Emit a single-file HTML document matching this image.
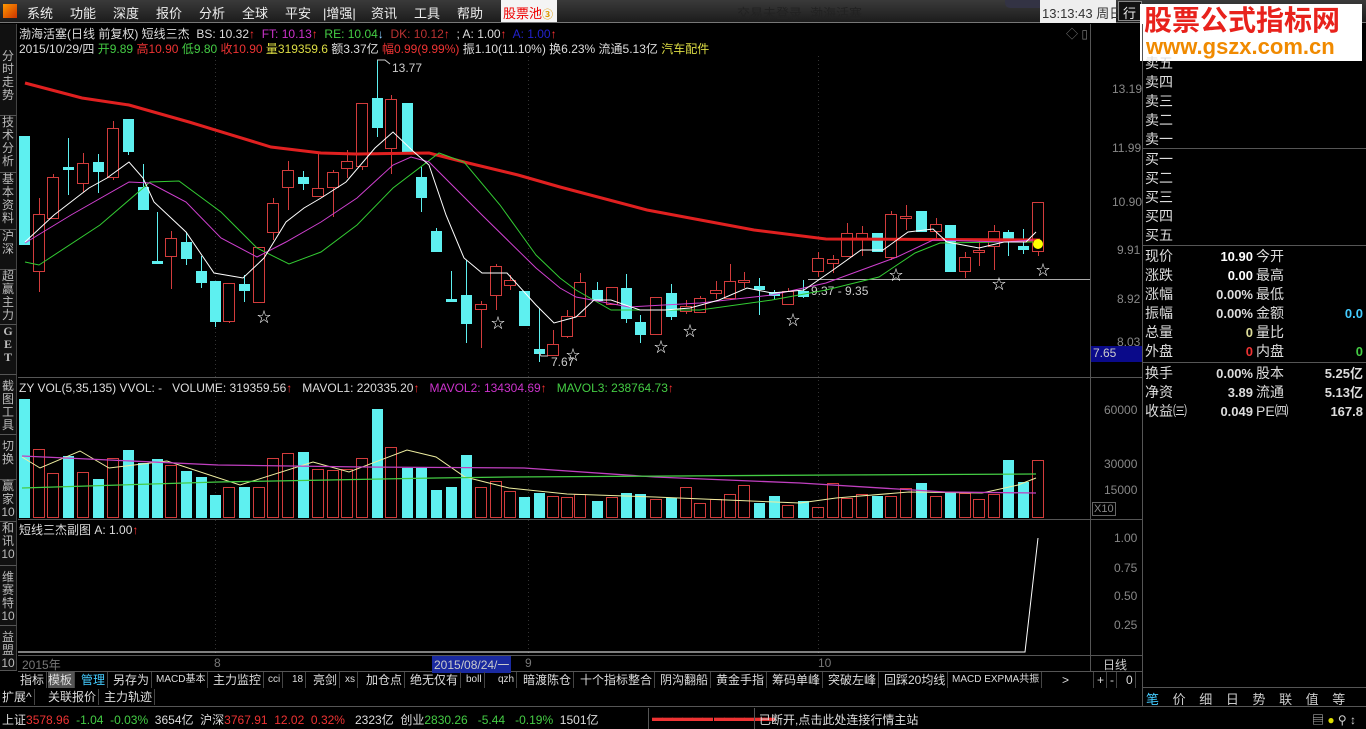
<!DOCTYPE html>
<html><head><meta charset="utf-8">
<style>
*{margin:0;padding:0;box-sizing:border-box}
body{width:1366px;height:729px;background:#000;overflow:hidden;position:relative;font-family:"Liberation Sans","Noto Sans CJK SC",sans-serif;font-size:12px;color:#ccc}
.a{position:absolute;white-space:nowrap}
#menu{position:absolute;left:0;top:0;width:1366px;height:23px;background:linear-gradient(#3a3a3a,#1c1c1c);border-bottom:1px solid #777}
#menu span{position:absolute;top:3px;color:#eee;font-size:13px}
.side{position:absolute;left:0;width:17px;background:#111;border-right:1px solid #444;color:#bbb;font-size:12px;line-height:13px;text-align:center;border-bottom:1px solid #555}
.rp{color:#ddd;font-size:14px;line-height:19px}
.tb span{position:absolute;top:0;color:#ddd;font-size:12px;line-height:16px;border-right:1px solid #444;padding-right:2px}
.tb .s{font-size:10px}
</style></head><body>
<div id="menu">
<div style="position:absolute;left:3px;top:4px;width:14px;height:14px;background:linear-gradient(135deg,#f90,#c30)"></div>
<span style="left:27px">系统</span><span style="left:70px">功能</span><span style="left:113px">深度</span><span style="left:156px">报价</span><span style="left:199px">分析</span><span style="left:242px">全球</span><span style="left:285px">平安</span><span style="left:323px">|增强|</span><span style="left:371px">资讯</span><span style="left:414px">工具</span><span style="left:457px">帮助</span>
<div style="position:absolute;left:501px;top:0;width:56px;height:22px;background:#f4f4f4"></div><span style="left:503px;color:#e00">股票池<b style="color:#d90;font-size:11px">③</b></span>
<span style="left:737px;color:#222">交易未登录</span><span style="left:810px;color:#222">渤海活塞</span>
<div style="position:absolute;left:1005px;top:0;width:58px;height:8px;background:#334;border-radius:0 0 5px 5px"></div>
<div style="position:absolute;left:1040px;top:0;width:76px;height:23px;background:#eee"></div><span style="left:1042px;color:#333">13:13:43 周日</span>
<div style="position:absolute;left:1118px;top:1px;width:24px;height:20px;border:1px solid #888;background:#111"></div><span style="left:1123px">行</span>
</div>
<!-- watermark -->
<div style="position:absolute;left:1140px;top:4px;width:222px;height:57px;background:#fff;overflow:hidden">
<div class="a" style="left:4px;top:0px;color:#e8221c;font-size:28px;font-weight:bold;line-height:34px">股票公式指标网</div>
<div class="a" style="left:6px;top:31px;color:#f08a00;font-size:22px;font-weight:bold;line-height:24px">www.gszx.com.cn</div>
</div>

<!-- sidebar -->
<div class="side" style="top:24px;height:92px;padding-top:26px">分<br>时<br>走<br>势</div>
<div class="side" style="top:116px;height:57px">技<br>术<br>分<br>析</div>
<div class="side" style="top:173px;height:57px">基<br>本<br>资<br>料</div>
<div class="side" style="top:230px;height:40px">沪<br>深</div>
<div class="side" style="top:270px;height:55px">超<br>赢<br>主<br>力</div>
<div class="side" style="top:325px;height:50px;font-weight:bold;font-family:'Liberation Serif'">G<br>E<br>T</div>
<div class="side" style="top:375px;height:60px;padding-top:5px">截<br>图<br>工<br>具</div>
<div class="side" style="top:435px;height:45px;padding-top:5px">切<br>换</div>
<div class="side" style="top:480px;height:42px">赢<br>家<br>10</div>
<div class="side" style="top:522px;height:44px">和<br>讯<br>10</div>
<div class="side" style="top:566px;height:60px;padding-top:5px">维<br>赛<br>特<br>10</div>
<div class="side" style="top:626px;height:45px;padding-top:5px">益<br>盟<br>10</div>

<!-- info lines -->
<div class="a" style="left:19px;top:25px;font-size:12px;color:#ddd">渤海活塞(日线 前复权) 短线三杰&nbsp; BS: 10.32<span style="color:#f33">↑</span>&nbsp; <span style="color:#c3c">FT: 10.13</span><span style="color:#f33">↑</span>&nbsp; <span style="color:#4c4">RE: 10.04</span><span style="color:#8cf">↓</span>&nbsp; <span style="color:#b33">DK: 10.12</span><span style="color:#f33">↑</span>&nbsp; ; A: 1.00<span style="color:#f33">↑</span>&nbsp; <span style="color:#22c">A: 1.00</span><span style="color:#f33">↑</span></div>
<div class="a" style="left:19px;top:40px;font-size:12px;color:#ddd">2015/10/29/四 <span style="color:#4c4">开9.89</span> <span style="color:#e33">高10.90</span> <span style="color:#4c4">低9.80</span> <span style="color:#e33">收10.90</span> <span style="color:#dd4">量319359.6</span> 额3.37亿 <span style="color:#e33">幅0.99(9.99%)</span> 振1.10(11.10%) 换6.23% 流通5.13亿 <span style="color:#dd4">汽车配件</span></div>
<div class="a" style="left:1066px;top:25px;color:#777;font-size:12px">◇ ▯</div>

<!-- right axis labels -->
<div class="a" style="left:1112px;top:82px;color:#888">13.19</div>
<div class="a" style="left:1112px;top:141px;color:#888">11.99</div>
<div class="a" style="left:1112px;top:195px;color:#888">10.90</div>
<div class="a" style="left:1117px;top:243px;color:#888">9.91</div>
<div class="a" style="left:1117px;top:292px;color:#888">8.92</div>
<div class="a" style="left:1117px;top:335px;color:#888">8.03</div>
<div class="a" style="left:1091px;top:346px;width:51px;height:16px;background:#0a0a8a;color:#ccc;padding-left:2px">7.65</div>
<div class="a" style="left:1104px;top:403px;color:#888">60000</div>
<div class="a" style="left:1104px;top:457px;color:#888">30000</div>
<div class="a" style="left:1104px;top:483px;color:#888">15000</div>
<div class="a" style="left:1092px;top:502px;color:#888;border:1px solid #666;padding:0 1px;font-size:11px">X10</div>
<div class="a" style="left:1114px;top:531px;color:#888">1.00</div>
<div class="a" style="left:1114px;top:561px;color:#888">0.75</div>
<div class="a" style="left:1114px;top:589px;color:#888">0.50</div>
<div class="a" style="left:1114px;top:618px;color:#888">0.25</div>

<!-- chart labels -->
<div class="a" style="left:392px;top:61px;color:#ccc">13.77</div>
<div class="a" style="left:551px;top:355px;color:#ccc">7.67</div>
<div class="a" style="left:811px;top:284px;color:#ccc">9.37 - 9.35</div>
<div class="a" style="left:19px;top:381px;color:#ddd">ZY VOL(5,35,135) VVOL: -&nbsp;&nbsp; VOLUME: 319359.56<span style="color:#f33">↑</span>&nbsp;&nbsp; MAVOL1: 220335.20<span style="color:#f33">↑</span>&nbsp;&nbsp; <span style="color:#c3c">MAVOL2: 134304.69</span><span style="color:#f33">↑</span>&nbsp;&nbsp; <span style="color:#4c4">MAVOL3: 238764.73</span><span style="color:#f33">↑</span></div>
<div class="a" style="left:19px;top:521px;color:#ddd">短线三杰副图 A: 1.00<span style="color:#f33">↑</span></div>

<svg class="a" style="left:0;top:0" width="1366" height="729" id="sv">
<g stroke="#555" stroke-width="1" fill="none">
<line x1="1090.5" y1="24" x2="1090.5" y2="671"/>
<line x1="1142.5" y1="24" x2="1142.5" y2="706"/>
<line x1="18" y1="377.5" x2="1142" y2="377.5"/>
<line x1="18" y1="519.5" x2="1142" y2="519.5"/>
<line x1="18" y1="655.5" x2="1142" y2="655.5"/>
<line x1="18" y1="671.5" x2="1142" y2="671.5"/>
<line x1="1143" y1="148.5" x2="1366" y2="148.5"/>
<line x1="1143" y1="245.5" x2="1366" y2="245.5"/>
<line x1="1143" y1="362.5" x2="1366" y2="362.5"/>
<line x1="1143" y1="687.5" x2="1366" y2="687.5"/>
<line x1="0" y1="706.5" x2="1366" y2="706.5"/>
</g>
<g stroke="#333" stroke-dasharray="1,3">
<line x1="215.5" y1="56" x2="215.5" y2="655"/><line x1="528.5" y1="56" x2="528.5" y2="655"/><line x1="818.5" y1="56" x2="818.5" y2="655"/>
</g>
<line x1="808" y1="279.5" x2="1090" y2="279.5" stroke="#aaa"/>
<g id="cd"></g>
</svg>

<!-- right panel -->
<div class="a rp" style="left:1145px;top:54px">卖五<br>卖四<br>卖三<br>卖二<br>卖一</div>
<div class="a rp" style="left:1145px;top:150px">买一<br>买二<br>买三<br>买四<br>买五</div>
<div class="a rp" style="left:1145px;top:247px">现价<br>涨跌<br>涨幅<br>振幅<br>总量<br>外盘</div>
<div class="a rp" style="left:1256px;top:247px">今开<br>最高<br>最低<br>金额<br>量比<br>内盘</div>
<div class="a" style="left:1190px;top:247px;width:63px;line-height:19px;font-size:13px;font-weight:bold;text-align:right"><span style="color:#fff">10.90</span><br><span style="color:#fff">0.00</span><br><span style="color:#ddd">0.00%</span><br><span style="color:#ddd">0.00%</span><br><span style="color:#dd9">0</span><br><span style="color:#e33">0</span></div>
<div class="a" style="left:1300px;top:304px;width:63px;line-height:19px;font-size:13px;font-weight:bold;text-align:right"><span style="color:#4cf">0.0</span><br><br><span style="color:#4c4">0</span></div>
<div class="a rp" style="left:1145px;top:364px">换手<br>净资<br>收益㈢</div>
<div class="a rp" style="left:1256px;top:364px">股本<br>流通<br>PE㈣</div>
<div class="a" style="left:1190px;top:364px;width:63px;line-height:19px;font-size:13px;font-weight:bold;text-align:right;color:#ddd">0.00%<br>3.89<br>0.049</div>
<div class="a" style="left:1300px;top:364px;width:63px;line-height:19px;font-size:13px;font-weight:bold;text-align:right;color:#ddd">5.25亿<br>5.13亿<br>167.8</div>

<!-- date axis -->
<div class="a" style="left:22px;top:656px;color:#777">2015年</div>
<div class="a" style="left:214px;top:656px;color:#777">8</div>
<div class="a" style="left:432px;top:656px;background:#1a2aa0;color:#ccc;padding:0 2px">2015/08/24/一</div>
<div class="a" style="left:525px;top:656px;color:#777">9</div>
<div class="a" style="left:818px;top:656px;color:#777">10</div>
<div class="a" style="left:1103px;top:656px;color:#ccc">日线</div>
<!-- toolbar -->
<div class="a tb" style="left:0;top:672px;width:1142px;height:16px">
<span style="left:20px">指标</span><span style="left:48px;background:#555">模板</span><span style="left:81px;color:#4cf">管理</span><span style="left:113px">另存为</span><span class="s" style="left:156px">MACD基本</span><span style="left:213px">主力监控</span><span class="s" style="left:268px">cci</span><span class="s" style="left:292px">18</span><span style="left:313px">亮剑</span><span class="s" style="left:345px">xs</span><span style="left:366px">加仓点</span><span style="left:410px">绝无仅有</span><span class="s" style="left:466px">boll</span><span class="s" style="left:498px">qzh</span><span style="left:523px">暗渡陈仓</span><span style="left:580px">十个指标整合</span><span style="left:660px">阴沟翻船</span><span style="left:716px">黄金手指</span><span style="left:772px">筹码单峰</span><span style="left:828px">突破左峰</span><span style="left:884px">回踩20均线</span><span class="s" style="left:952px">MACD EXPMA共振</span><span style="left:1062px;width:32px">&gt;</span><span style="left:1097px">+</span><span style="left:1110px">-</span><span style="left:1126px">0</span></div>
<div class="a tb" style="left:0;top:689px;width:200px;height:16px"><span style="left:2px">扩展^</span><span style="left:48px">关联报价</span><span style="left:104px">主力轨迹</span></div>
<div class="a" style="left:1146px;top:689px;color:#ccc;font-size:13px;word-spacing:10px"><span style="color:#4cf">笔</span> 价 细 日 势 联 值 等</div>
<!-- status -->
<div class="a" style="left:2px;top:711px;font-size:12px;color:#ddd">上证<span style="color:#e33">3578.96</span>&nbsp; <span style="color:#4c4">-1.04&nbsp; -0.03%</span>&nbsp; 3654亿&nbsp; 沪深<span style="color:#e33">3767.91</span>&nbsp; <span style="color:#e33">12.02&nbsp; 0.32%</span>&nbsp;&nbsp; 2323亿&nbsp; 创业<span style="color:#4c4">2830.26</span>&nbsp;&nbsp; <span style="color:#4c4">-5.44&nbsp;&nbsp; -0.19%</span>&nbsp; 1501亿</div>
<div class="a" style="left:648px;top:708px;width:1px;height:21px;background:#555"></div>
<div class="a" style="left:652px;top:712px;color:#e33;font-size:11px;letter-spacing:-1px">▬▬▬▬▬▬ ▬▬▬▬▬▬</div>
<div class="a" style="left:754px;top:708px;width:1px;height:21px;background:#555"></div>
<div class="a" style="left:759px;top:711px;color:#ddd">已断开,点击此处连接行情主站</div>
<div class="a" style="left:1312px;top:711px;color:#ccc">▤ <span style="color:#dd0">●</span> ⚲ ↕</div>

<script>
var C=[[24,136,244,136,244,0],[39,214,271,198,292,1],[53,177,218,174,218,1],[68,167,169,138,195,0],[83,163,183,153,192,1],[98,162,171,154,193,0],[113,128,177,121,180,1],[128,119,151,119,155,0],[143,187,209,164,209,0],[157,261,263,212,263,0],[171,238,256,231,289,1],[186,242,258,232,265,0],[201,271,282,256,288,0],[215,281,321,281,327,0],[229,283,321,283,323,1],[244,284,290,275,302,0],[259,247,302,247,302,1],[273,203,232,198,240,1],[288,170,187,161,210,1],[303,177,183,171,190,0],[318,188,196,152,197,1],[333,172,187,170,217,1],[347,161,168,150,178,1],[362,103,166,103,170,1],[377,98,127,60,137,0],[391,99,148,95,174,1],[407,103,152,103,152,0],[421,177,197,167,212,0],[436,231,251,228,251,0],[451,299,301,271,301,0],[466,295,323,260,343,0],[481,304,309,301,348,1],[496,266,295,264,310,1],[510,280,285,275,290,1],[524,291,325,291,325,0],[539,349,353,308,362,0],[553,344,355,330,355,1],[567,316,336,310,338,1],[580,282,316,273,316,1],[597,290,300,282,300,0],[612,287,304,287,305,1],[626,288,318,274,323,0],[640,322,334,315,343,0],[656,297,334,297,334,1],[671,293,316,284,320,0],[686,306,311,300,314,1],[700,298,312,296,313,1],[716,290,293,281,299,1],[730,281,298,264,300,1],[744,280,282,272,288,1],[759,286,289,278,315,0],[774,292,295,290,300,0],[788,291,304,288,305,1],[803,291,296,280,298,0],[818,258,271,252,277,1],[833,259,263,255,273,1],[847,233,256,223,256,1],[862,233,239,226,256,1],[877,233,251,233,251,0],[891,214,257,211,260,1],[906,216,218,205,230,1],[921,211,231,211,231,0],[936,224,231,218,240,1],[950,225,271,225,272,0],[965,257,271,252,278,1],[979,250,252,241,266,1],[994,231,246,225,270,1],[1008,232,238,230,256,0],[1023,246,249,229,254,0],[1038,202,251,202,256,1]];
var V=[399,449,473,456,472,479,458,450,463,459,465,471,477,495,487,487,487,458,453,452,469,470,469,458,409,447,468,468,490,487,455,487,481,491,497,493,496,497,494,501,497,493,494,499,498,487,503,499,494,485,503,496,505,501,507,483,498,494,496,496,488,483,496,492,493,499,494,460,482,460];
var s='',R='#d23c3c',B='#5ef0f0';
for(var i=0;i<C.length;i++){var c=C[i],x=c[0],col=c[5]?R:B;
s+='<line x1="'+(x+.5)+'" y1="'+c[3]+'" x2="'+(x+.5)+'" y2="'+c[4]+'" stroke="'+col+'"/>';
var h=Math.max(1,c[2]-c[1]);
if(c[5])s+='<rect x="'+(x-5.5)+'" y="'+(c[1]+.5)+'" width="11" height="'+h+'" fill="#000" stroke="'+R+'"/>';
else s+='<rect x="'+(x-5)+'" y="'+c[1]+'" width="11" height="'+(h+1)+'" fill="'+B+'"/>';
var vt=V[i];
if(c[5])s+='<rect x="'+(x-5.5)+'" y="'+(vt+.5)+'" width="11" height="'+(517-vt)+'" fill="none" stroke="'+R+'"/>';
else s+='<rect x="'+(x-5)+'" y="'+vt+'" width="11" height="'+(518-vt)+'" fill="'+B+'"/>';}
function pl(p,col,w){return '<polyline fill="none" stroke="'+col+'" stroke-width="'+w+'" points="'+p+'"/>';}
s+=pl('25,83 82,98 129,105 189,122 271,147 321,153 357,154 429,153 464,162 518,175 560,187 647,210 754,230 826,239 1040,240','#e02020',3);
s+=pl('25,262 39,265 100,225 150,182 179,181 221,212 257,248 289,264 321,252 357,225 393,188 439,153 464,162 500,205 536,255 560,278 576,290 611,310 700,310 772,300 826,290 879,277 915,253 940,243 1004,242 1033,242','#3c3',1);
s+=pl('25,243 71,215 129,182 150,183 186,202 221,238 257,257 286,242 321,222 357,198 393,165 411,157 429,162 482,215 536,268 560,288 576,297 629,307 700,303 772,295 826,283 897,257 933,240 1004,242 1033,240','#d040d0',1);
s+=pl('25,242 54,215 89,188 107,178 129,162 143,178 154,202 186,232 214,273 243,278 264,258 286,222 304,208 321,198 346,182 375,148 393,132 414,152 429,165 446,215 464,258 482,273 507,273 536,305 554,323 576,317 594,300 611,300 640,310 665,310 690,308 719,300 747,288 772,293 804,290 833,270 861,250 883,250 908,232 933,229 947,242 979,248 1004,242 1026,242 1036,232','#fff',1);
s+=pl('22,457 40,468 80,451 109,468 167,461 240,485 313,462 349,472 407,450 436,457 465,477 509,488 567,494 655,497 727,500 800,503 836,498 909,492 982,493 1018,485 1036,478','#eeeea0',1);
s+=pl('22,456 218,465 364,467 524,468 655,477 800,483 945,492 1036,493','#c040c0',1.3);
s+=pl('22,488 218,482 436,478 509,477 836,475 1036,474','#4c4',1.3);
s+=pl('18,652 1025,652 1038,538','#fff',1);
s+=pl('377,60 385,60 390,64','#ccc',1);
s+=pl('548,356 541,356 539,352','#ccc',1);
s+='<circle cx="1038" cy="244" r="5" fill="#ff0"/>';
var st=[[264,317],[498,323],[573,355],[661,347],[690,331],[793,320],[896,275],[999,284],[1043,270]];
for(var j=0;j<st.length;j++)s+='<text x="'+st[j][0]+'" y="'+(st[j][1]+5)+'" fill="#fff" font-size="14" text-anchor="middle">☆</text>';
document.getElementById('cd').innerHTML=s;
</script>
</body></html>
